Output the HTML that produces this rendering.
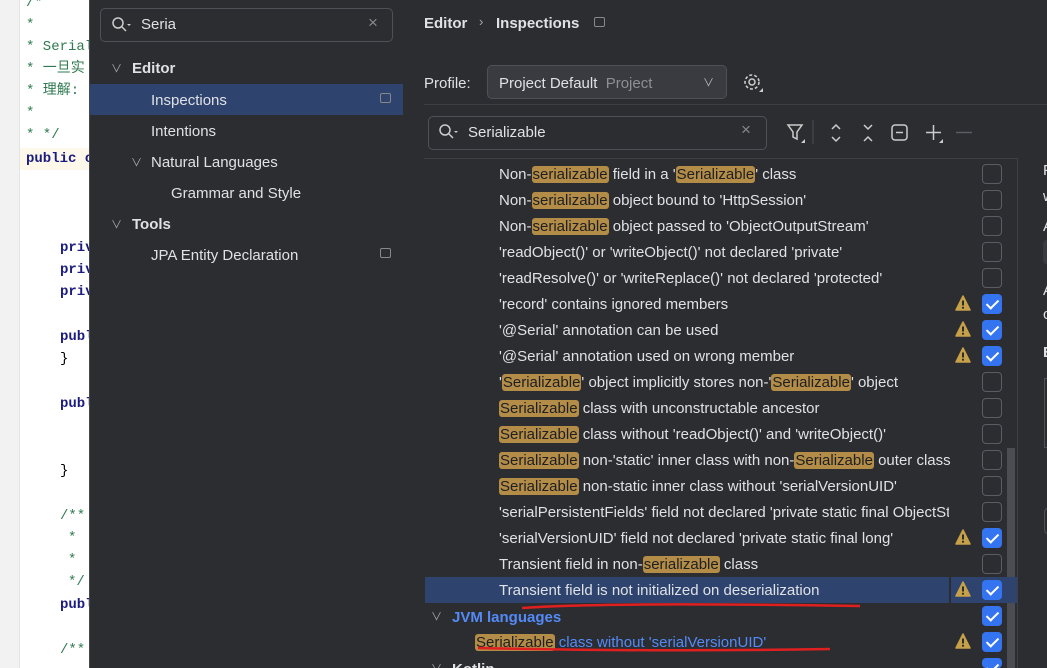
<!DOCTYPE html>
<html style="overflow:hidden;width:1047px;height:668px"><head><meta charset="utf-8"><style>
*{margin:0;padding:0;box-sizing:border-box}
body{width:1047px;height:668px;overflow:hidden;background:#2b2d30;font-family:"Liberation Sans","Noto Sans CJK SC",sans-serif;color:#dfe1e5;position:relative;font-size:15px;letter-spacing:0}
.abs{position:absolute;white-space:nowrap}
#ed{position:absolute;left:0;top:0;width:89px;height:668px;background:#fff;overflow:hidden;letter-spacing:0}
#gut{position:absolute;left:0;top:0;width:20px;height:668px;background:#f2f2f2;border-right:1px solid #e4e4e4}
.cl{position:absolute;left:26px;font-family:"Liberation Mono","Noto Sans CJK SC",monospace;font-size:14px;line-height:20px;white-space:nowrap}
.cm{color:#2f7a4f}.kw{color:#1b1b80;font-weight:bold}
#tree{position:absolute;left:89px;top:0;width:314px;height:668px;background:#2b2d30;border-left:1px solid #45484d}
.sb{position:absolute;border:1px solid #4e5157;border-radius:5px;background:#2b2d30}
.hl{background:#b38c47;color:#1e1f22;border-radius:3px;padding:0 1px}
.row{position:absolute;left:425px;width:524px;height:26px;line-height:27px;padding-left:74px;white-space:nowrap}
.cb{position:absolute;left:982px;width:20px;height:20px;border:1.5px solid #5a5d63;border-radius:4px}
.cb.on{background:#3574f0;border:none}
.cb.on::after{content:"";position:absolute;left:7px;top:3px;width:5px;height:10px;border:solid #fff;border-width:0 2.5px 2.5px 0;transform:rotate(45deg)}
.wr{position:absolute;left:955px;width:16px;height:16px}
</style></head><body>
<div id="ed"><div id="gut"></div>
<div class="cl cm" style="top:-7px">/*</div>
<div class="cl cm" style="top:15px">*</div>
<div class="cl cm" style="top:37px">* Serial</div>
<div class="cl cm" style="top:59px">* 一旦实</div>
<div class="cl cm" style="top:81px">* 理解:</div>
<div class="cl cm" style="top:103px">*</div>
<div class="cl cm" style="top:125px">* */</div>
<div style="position:absolute;left:20px;top:148px;width:69px;height:22px;background:#fdf8e9"></div>
<div class="cl kw" style="top:149px">public c</div>
<div class="cl kw" style="top:238px;left:60px">priv</div>
<div class="cl kw" style="top:260px;left:60px">priv</div>
<div class="cl kw" style="top:282px;left:60px">priv</div>
<div class="cl kw" style="top:327px;left:60px">publ</div>
<div class="cl" style="top:349px;left:60px;color:#000">}</div>
<div class="cl kw" style="top:394px;left:60px">publ</div>
<div class="cl" style="top:461px;left:60px;color:#000">}</div>
<div class="cl cm" style="top:506px;left:60px">/**</div>
<div class="cl cm" style="top:528px;left:68px">*</div>
<div class="cl cm" style="top:550px;left:68px">*</div>
<div class="cl cm" style="top:572px;left:68px">*/</div>
<div class="cl kw" style="top:595px;left:60px">publ</div>
<div class="cl cm" style="top:640px;left:60px">/**</div>
</div>
<div id="tree">
<div class="sb" style="left:10px;top:8px;width:293px;height:34px"></div>
<svg class="abs" style="left:21px;top:16px" width="24" height="18"><circle cx="7" cy="7" r="5" fill="none" stroke="#ccc" stroke-width="1.5"/><path d="M11 11l4 4" stroke="#ccc" stroke-width="1.5"/><path d="M16 8h4l-2 2z" fill="#ccc"/></svg>
<div class="abs" style="left:51px;top:16px">Seria</div>
<div class="abs" style="left:278px;top:13px;color:#888;font-size:17px">×</div>
<div class="abs" style="left:21px;top:60px;color:#aaa;font-size:11px">∨</div>
<div class="abs" style="left:42px;top:60px;font-weight:bold">Editor</div>
<div style="position:absolute;left:0;top:84px;width:313px;height:31px;background:#2e436e"></div>
<div class="abs" style="left:61px;top:92px">Inspections</div>
<div class="abs" style="left:290px;top:93px;width:11px;height:10px;border:1.5px solid #888;border-radius:2px"></div>
<div class="abs" style="left:61px;top:123px">Intentions</div>
<div class="abs" style="left:41px;top:154px;color:#aaa;font-size:11px">∨</div>
<div class="abs" style="left:61px;top:154px">Natural Languages</div>
<div class="abs" style="left:81px;top:185px">Grammar and Style</div>
<div class="abs" style="left:21px;top:216px;color:#aaa;font-size:11px">∨</div>
<div class="abs" style="left:42px;top:216px;font-weight:bold">Tools</div>
<div class="abs" style="left:61px;top:247px">JPA Entity Declaration</div>
<div class="abs" style="left:290px;top:248px;width:11px;height:10px;border:1.5px solid #888;border-radius:2px"></div>
</div>
<div class="abs" style="left:424px;top:15px;font-weight:bold">Editor</div>
<div class="abs" style="left:479px;top:14px;color:#aaa;font-size:13px">›</div>
<div class="abs" style="left:496px;top:15px;font-weight:bold">Inspections</div>
<div class="abs" style="left:594px;top:17px;width:11px;height:10px;border:1.5px solid #888;border-radius:2px"></div>
<div class="abs" style="left:424px;top:75px">Profile:</div>
<div class="sb" style="left:487px;top:65px;width:240px;height:34px;background:#393b40;border-color:#4e5157"></div>
<div class="abs" style="left:499px;top:75px">Project Default <span style="color:#8c8f94">&nbsp;Project</span></div>
<div class="abs" style="left:703px;top:74px;color:#bbb;font-size:11px">∨</div>
<svg class="abs" style="left:742px;top:72px" width="22" height="22"><circle cx="10" cy="10" r="3" fill="none" stroke="#ccc" stroke-width="1.5"/><circle cx="10" cy="10" r="7" fill="none" stroke="#ccc" stroke-width="1.6" stroke-dasharray="3 2"/><path d="M17 20h4v-4z" fill="#ccc"/></svg>
<div style="position:absolute;left:424px;top:104px;width:623px;height:1px;background:#3c3f44"></div>
<div class="sb" style="left:428px;top:116px;width:339px;height:34px"></div>
<svg class="abs" style="left:438px;top:123px" width="24" height="18"><circle cx="7" cy="7" r="5" fill="none" stroke="#ccc" stroke-width="1.5"/><path d="M11 11l4 4" stroke="#ccc" stroke-width="1.5"/><path d="M16 8h4l-2 2z" fill="#ccc"/></svg>
<div class="abs" style="left:468px;top:124px">Serializable</div>
<div class="abs" style="left:741px;top:120px;color:#888;font-size:17px">×</div>
<svg class="abs" style="left:786px;top:120px" width="200" height="26">
<path d="M2 5h14l-5 7v7l-4-2v-5z" fill="none" stroke="#ccc" stroke-width="1.5"/><path d="M15 23h4v-4z" fill="#ccc"/>
<path d="M27 0v24" stroke="#4a4d52"/>
<path d="M46 9l4-4 4 4M46 17l4 4 4-4" fill="none" stroke="#ccc" stroke-width="1.5"/>
<path d="M78 5l4 4 4-4M78 21l4-4 4 4" fill="none" stroke="#ccc" stroke-width="1.5"/>
<rect x="106" y="5" width="15" height="15" rx="3" fill="none" stroke="#ccc" stroke-width="1.5"/><path d="M110 12.5h7" stroke="#ccc" stroke-width="1.5"/>
<path d="M140 12.5h15M147.5 5v15" stroke="#ccc" stroke-width="1.5"/><path d="M153 23h4v-4z" fill="#ccc"/>
<path d="M170 12.5h16" stroke="#5a5d63" stroke-width="1.5"/>
</svg>
<div style="position:absolute;left:424px;top:158px;width:594px;height:510px;border-top:1px solid #3c3f44;border-right:1px solid #3c3f44"></div>
<div style="position:absolute;left:1007px;top:448px;width:8px;height:220px;background:#4b4d52"></div>
<div class="row" style="top:161px">Non-<span class="hl">serializable</span> field in a '<span class="hl">Serializable</span>' class</div>
<div class="row" style="top:187px">Non-<span class="hl">serializable</span> object bound to 'HttpSession'</div>
<div class="row" style="top:213px">Non-<span class="hl">serializable</span> object passed to 'ObjectOutputStream'</div>
<div class="row" style="top:239px">'readObject()' or 'writeObject()' not declared 'private'</div>
<div class="row" style="top:265px">'readResolve()' or 'writeReplace()' not declared 'protected'</div>
<div class="row" style="top:291px">'record' contains ignored members</div>
<div class="row" style="top:317px">'@Serial' annotation can be used</div>
<div class="row" style="top:343px">'@Serial' annotation used on wrong member</div>
<div class="row" style="top:369px">'<span class="hl">Serializable</span>' object implicitly stores non-'<span class="hl">Serializable</span>' object</div>
<div class="row" style="top:395px"><span class="hl">Serializable</span> class with unconstructable ancestor</div>
<div class="row" style="top:421px"><span class="hl">Serializable</span> class without 'readObject()' and 'writeObject()'</div>
<div class="row" style="top:447px"><span class="hl">Serializable</span> non-'static' inner class with non-<span class="hl">Serializable</span> outer class</div>
<div class="row" style="top:473px"><span class="hl">Serializable</span> non-static inner class without 'serialVersionUID'</div>
<div class="row" style="top:499px;overflow:hidden">'serialPersistentFields' field not declared 'private static final ObjectStreamField[]'</div>
<div class="row" style="top:525px">'serialVersionUID' field not declared 'private static final long'</div>
<div class="row" style="top:551px">Transient field in non-<span class="hl">serializable</span> class</div>
<div class="row" style="top:577px;background:#2e436e;width:592px">Transient field is not initialized on deserialization</div>
<div style="position:absolute;left:949px;top:577px;width:2px;height:26px;background:#2b2d30"></div>
<div class="abs" style="left:431px;top:608px;color:#aaa;font-size:11px">∨</div>
<div class="abs" style="left:452px;top:609px;color:#548af7;font-weight:bold">JVM languages</div>
<div class="abs" style="left:475px;top:634px;color:#548af7"><span class="hl">Serializable</span> class without 'serialVersionUID'</div>
<div class="abs" style="left:431px;top:660px;color:#aaa;font-size:11px">∨</div>
<div class="abs" style="left:452px;top:661px;font-weight:bold">Kotlin</div>
<svg class="abs" style="left:0;top:0" width="1047" height="668"><path d="M522 608Q600 602 860 606" stroke="#e02020" stroke-width="2.5" fill="none"/><path d="M478 648Q650 652 830 649" stroke="#e02020" stroke-width="2.5" fill="none"/></svg>
<div class="cb" style="top:164px"></div><div class="cb" style="top:190px"></div><div class="cb" style="top:216px"></div><div class="cb" style="top:242px"></div><div class="cb" style="top:268px"></div>
<div class="cb on" style="top:294px"></div><div class="cb on" style="top:320px"></div><div class="cb on" style="top:346px"></div>
<div class="cb" style="top:372px"></div><div class="cb" style="top:398px"></div><div class="cb" style="top:424px"></div><div class="cb" style="top:450px"></div><div class="cb" style="top:476px"></div><div class="cb" style="top:502px"></div>
<div class="cb on" style="top:528px"></div><div class="cb" style="top:554px"></div><div class="cb on" style="top:580px"></div><div class="cb on" style="top:606px"></div><div class="cb on" style="top:632px"></div><div class="cb on" style="top:658px;height:10px"></div>
<svg width="0" height="0" style="position:absolute"><defs><g id="w"><path d="M8 1L15 15H1z" fill="#c7a04a" stroke="#c7a04a" stroke-linejoin="round" stroke-width="1.5"/><path d="M8 5.5v5" stroke="#2b2d30" stroke-width="2"/><circle cx="8" cy="12.7" r="1.1" fill="#2b2d30"/></g></defs></svg>
<svg class="wr" style="top:295px"><use href="#w"/></svg>
<svg class="wr" style="top:321px"><use href="#w"/></svg>
<svg class="wr" style="top:347px"><use href="#w"/></svg>
<svg class="wr" style="top:529px"><use href="#w"/></svg>
<svg class="wr" style="top:581px"><use href="#w"/></svg>
<svg class="wr" style="top:633px"><use href="#w"/></svg>
<div class="abs" style="left:1043px;top:162px">F</div>
<div class="abs" style="left:1043px;top:188px">w</div>
<div class="abs" style="left:1043px;top:218px">A</div>
<div class="abs" style="left:1043px;top:240px;width:10px;height:24px;background:#393b40;border-radius:4px"></div>
<div class="abs" style="left:1043px;top:282px">A</div>
<div class="abs" style="left:1043px;top:306px">c</div>
<div class="abs" style="left:1043px;top:344px;font-weight:bold">E</div>
<div class="abs" style="left:1044px;top:378px;width:10px;height:70px;border:1px solid #4e5157"></div>
<div class="abs" style="left:1044px;top:508px;width:10px;height:26px;border:1px solid #4e5157;border-radius:4px"></div>
</body></html>
